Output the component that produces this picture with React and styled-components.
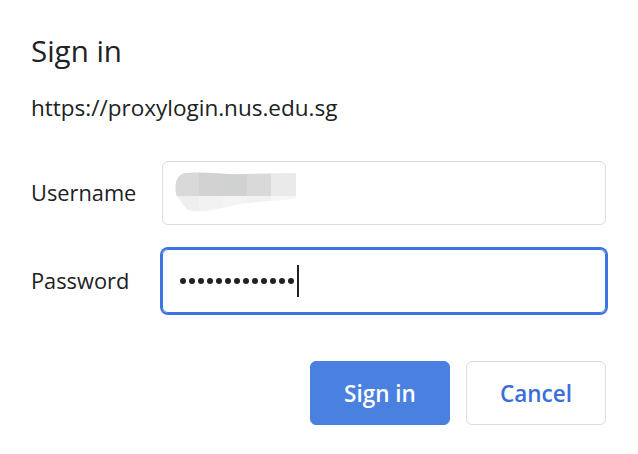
import React from "react";
import styled, { createGlobalStyle } from "styled-components";

const GlobalStyle = createGlobalStyle`
  html, body {
    margin: 0;
    padding: 0;
    background: #ffffff;
  }
  body {
    font-family: "Open Sans", "Noto Sans", sans-serif;
    color: #202124;
  }
`;

const Dialog = styled.div`
  width: 638px;
  height: 454px;
  box-sizing: border-box;
  padding: 31px 32px 0 31px;
  display: flex;
  flex-direction: column;
`;

const Title = styled.h1`
  margin: 0;
  font-size: 29.5px;
  font-weight: 400;
  line-height: 40px;
`;

const Origin = styled.div`
  margin-top: 22px;
  font-size: 22.5px;
  line-height: 30px;
  color: #202124;
`;

const Form = styled.div`
  margin-top: 38px;
  display: grid;
  grid-template-columns: 131px 1fr;
  row-gap: 24px;
  align-items: center;
`;

const Label = styled.div`
  font-size: 21.8px;
  line-height: 30px;
`;

const Field = styled.div`
  height: 64px;
  box-sizing: border-box;
  border: 1px solid ${(p) => (p.$focused ? "#3a74e0" : "#dadce0")};
  border-radius: 6px;
  box-shadow: ${(p) => (p.$focused ? "0 0 0 2px #3a74e0" : "none")};
  display: flex;
  align-items: center;
  padding-left: ${(p) => (p.$focused ? "17px" : "12px")};
`;

const Dots = styled.div`
  display: flex;
  align-items: center;
  gap: 3px;
`;

const Dot = styled.span`
  width: 6px;
  height: 6px;
  border-radius: 50%;
  background: #202124;
`;

const Caret = styled.span`
  width: 2px;
  height: 32px;
  margin-left: 3px;
  background: #202124;
`;

const Actions = styled.div`
  margin-top: 48px;
  display: flex;
  justify-content: flex-end;
  gap: 16px;
`;

const Button = styled.button`
  width: 140px;
  height: 64px;
  box-sizing: border-box;
  border-radius: 6px;
  font-family: "Open Sans", "Noto Sans", sans-serif;
  font-size: 22.5px;
  font-weight: 600;
  cursor: pointer;
  border: 1px solid ${(p) => (p.$primary ? "#4a80df" : "#dadce0")};
  background: ${(p) => (p.$primary ? "#4a80df" : "#ffffff")};
  color: ${(p) => (p.$primary ? "#ffffff" : "#3a6fd9")};
`;

function Smudge() {
  const top = ["#d9d9d9", "#d2d2d2", "#d0d1d1", "#d9d9d9", "#eaeaea"];
  const bottom = ["#eeeeee", "#f2f2f2", "#f4f4f4", "#f1f1f1", "#f6f6f6"];
  return (
    <svg width="122" height="42" viewBox="0 0 122 42">
      <defs>
        <clipPath id="smudge">
          <path d="M10 1 C30 -1 50 3 70 2 L121 1 L121 26 C100 30 80 29 60 33 C40 38 25 41 13 38 C8 33 6 30 5 27 C0 25 0 16 1 10 C3 4 6 2 10 1 Z" />
        </clipPath>
      </defs>
      <g clipPath="url(#smudge)">
        {top.map((c, i) => (
          <rect key={"t" + i} x={i * 24} y="0" width="25" height="24" fill={c} />
        ))}
        {bottom.map((c, i) => (
          <rect key={"b" + i} x={i * 24} y="24" width="25" height="18" fill={c} />
        ))}
      </g>
    </svg>
  );
}

export default function App() {
  return (
    <>
      <GlobalStyle />
      <Dialog>
        <Title>Sign in</Title>
        <Origin>https://proxylogin.nus.edu.sg</Origin>
        <Form>
          <Label>Username</Label>
          <Field>
            <Smudge />
          </Field>
          <Label>Password</Label>
          <Field $focused>
            <Dots>
              {Array.from({ length: 13 }).map((_, i) => (
                <Dot key={i} />
              ))}
            </Dots>
            <Caret />
          </Field>
        </Form>
        <Actions>
          <Button $primary>Sign in</Button>
          <Button>Cancel</Button>
        </Actions>
      </Dialog>
    </>
  );
}
